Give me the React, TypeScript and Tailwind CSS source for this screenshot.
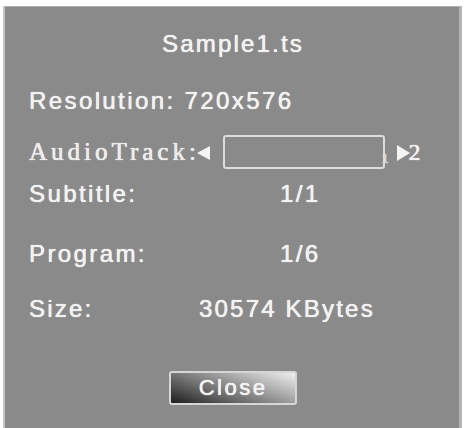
import React from "react";

const sans = { fontFamily: '"Liberation Sans", Arial, sans-serif' };
const serif = { fontFamily: '"Liberation Serif", "Times New Roman", serif' };

export default function App() {
  return (
    <div className="w-[464px] h-[428px] bg-white pt-[6px] pl-[3px] overflow-hidden">
      <div
        className="w-[459px] h-[422px] bg-[#8a8a8a] border-l-[2px] border-t border-r-[3px] border-l-[#c4c4c4] border-t-[#b0b0b0] border-r-[#b4b4b4] flex flex-col text-[#f2f2f2] [text-shadow:0_0_1px_#ffffff,0.25px_0_0.5px_rgba(255,255,255,0.7)]"
        style={sans}
      >
        <div className="mt-[25px] h-[24px] leading-[24px] text-[24px] tracking-[2.2px] text-center pl-[2px]">
          Sample1.ts
        </div>
        <div className="mt-[33px] h-[24px] leading-[24px] text-[24px] tracking-[2.4px] pl-[24px]">
          Resolution: 720x576
        </div>
        <div className="mt-[22px] h-[34px] flex items-center pl-[24px]">
          <span className="text-[25px] leading-[34px] tracking-[4px] text-[#ececec]" style={serif}>
            AudioTrack:
          </span>
          <svg width="15" height="18" viewBox="0 0 15 18" className="-ml-[4px] mt-[1px]">
            <polygon points="14,2 1,9 14,16" fill="#f4f4f4" />
          </svg>
          <div className="ml-[12px] w-[162px] h-[34px] border-2 border-[#dcdcdc] rounded-[3px]" />
          <span className="-ml-[3px] mt-[14px] text-[12px] leading-[12px] text-[#d0d0d0]">1</span>
          <svg width="15" height="20" viewBox="0 0 15 20" className="ml-[7px] mt-[2px]">
            <polygon points="1,2 14,10 1,18" fill="#f4f4f4" />
          </svg>
          <span className="text-[24px] leading-[34px] -ml-[2px]" style={serif}>2</span>
        </div>
        <div className="mt-[13px] h-[24px] leading-[24px] text-[24px] tracking-[2.4px] pl-[24px] flex">
          <span className="w-[251px]">Subtitle:</span>
          <span>1/1</span>
        </div>
        <div className="mt-[36px] h-[24px] leading-[24px] text-[24px] tracking-[2.4px] pl-[24px] flex">
          <span className="w-[251px]">Program:</span>
          <span>1/6</span>
        </div>
        <div className="mt-[31px] h-[24px] leading-[24px] text-[24px] tracking-[2.2px] pl-[24px] flex">
          <span className="w-[170px]">Size:</span>
          <span>30574 KBytes</span>
        </div>
        <div className="mt-[50px] flex justify-center pl-[2px]">
          <div className="w-[128px] h-[34px] rounded-[3px] border-2 border-[#d6d6d6] bg-[linear-gradient(20deg,#1e1e1e_0%,#6a6a6a_35%,#a8a8a8_65%,#f0f0f0_100%)] flex items-center justify-center text-[22px] tracking-[2.5px] leading-[30px]">
            Close
          </div>
        </div>
      </div>
    </div>
  );
}
